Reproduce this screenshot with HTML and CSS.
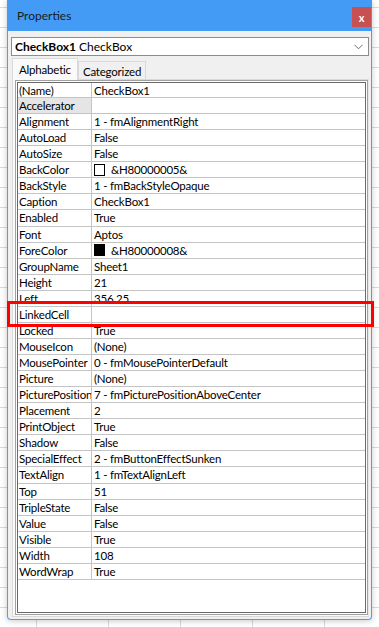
FILE: index.html
```html
<!DOCTYPE html>
<html>

<head>
    <title>Properties</title>
    <link rel="stylesheet" href="styles.css">
</head>

<body>
    <div class="window">
        <div class="titlebar">
            <span class="title">Properties</span>
            <span class="closeButton">x</span>
        </div>

        <div class="combo">
            <b>CheckBox1</b>&nbsp;CheckBox
            <svg class="chevron" width="9" height="6" viewBox="0 0 9 6">
                <path d="M0.5 0.8 L4.5 4.8 L8.5 0.8" fill="none" stroke="#6d6d6d" stroke-width="1" />
            </svg>
        </div>

        <div class="tabs">
            <div class="tab active">Alphabetic</div>
            <div class="tab">Categorized</div>
        </div>

        <div class="tabPane">
            <div class="grid">
                <div class="gridInner">
                    <div class="row first"><div class="name">(Name)</div><div class="value">CheckBox1</div></div>
                    <div class="row selected"><div class="name">Accelerator</div><div class="value"></div></div>
                    <div class="row"><div class="name">Alignment</div><div class="value">1 - fmAlignmentRight</div></div>
                    <div class="row"><div class="name">AutoLoad</div><div class="value">False</div></div>
                    <div class="row"><div class="name">AutoSize</div><div class="value">False</div></div>
                    <div class="row"><div class="name">BackColor</div><div class="value"><span class="swatch"></span>&amp;H80000005&amp;</div></div>
                    <div class="row"><div class="name">BackStyle</div><div class="value">1 - fmBackStyleOpaque</div></div>
                    <div class="row"><div class="name">Caption</div><div class="value">CheckBox1</div></div>
                    <div class="row"><div class="name">Enabled</div><div class="value">True</div></div>
                    <div class="row"><div class="name">Font</div><div class="value">Aptos</div></div>
                    <div class="row"><div class="name">ForeColor</div><div class="value"><span class="swatch black"></span>&amp;H80000008&amp;</div></div>
                    <div class="row"><div class="name">GroupName</div><div class="value">Sheet1</div></div>
                    <div class="row"><div class="name">Height</div><div class="value">21</div></div>
                    <div class="row"><div class="name">Left</div><div class="value">356.25</div></div>
                    <div class="row"><div class="name">LinkedCell</div><div class="value"></div></div>
                    <div class="row"><div class="name">Locked</div><div class="value">True</div></div>
                    <div class="row"><div class="name">MouseIcon</div><div class="value">(None)</div></div>
                    <div class="row"><div class="name">MousePointer</div><div class="value">0 - fmMousePointerDefault</div></div>
                    <div class="row"><div class="name">Picture</div><div class="value">(None)</div></div>
                    <div class="row"><div class="name">PicturePosition</div><div class="value">7 - fmPicturePositionAboveCenter</div></div>
                    <div class="row"><div class="name">Placement</div><div class="value">2</div></div>
                    <div class="row"><div class="name">PrintObject</div><div class="value">True</div></div>
                    <div class="row"><div class="name">Shadow</div><div class="value">False</div></div>
                    <div class="row"><div class="name">SpecialEffect</div><div class="value">2 - fmButtonEffectSunken</div></div>
                    <div class="row"><div class="name">TextAlign</div><div class="value">1 - fmTextAlignLeft</div></div>
                    <div class="row"><div class="name">Top</div><div class="value">51</div></div>
                    <div class="row"><div class="name">TripleState</div><div class="value">False</div></div>
                    <div class="row"><div class="name">Value</div><div class="value">False</div></div>
                    <div class="row"><div class="name">Visible</div><div class="value">True</div></div>
                    <div class="row"><div class="name">Width</div><div class="value">108</div></div>
                    <div class="row"><div class="name">WordWrap</div><div class="value">True</div></div>
                </div>
            </div>
        </div>
    </div>

    <div class="highlight"></div>
</body>

</html>
```

FILE: styles.css
```css
body {
    margin: 0;
    height: 627px;
    overflow: hidden;
    font-family: Lato, "Liberation Sans", Arial, sans-serif;
    font-size: 12px;
    color: #000000;
    background-color: #ffffff;
    background-image:
        linear-gradient(#dadada 1px, transparent 1px),
        linear-gradient(90deg, #dadada 1px, transparent 1px);
    background-size: 72px 20px;
    background-position: 36px 7px;
}

.window {
    margin-left: 7px;
    width: 363px;
    height: 619px;
    border: 1px solid #4a9ff5;
    border-top: none;
    border-radius: 0 0 4px 4px;
    background-color: #f0f0f0;
    box-shadow: 0 1px 6px rgba(0, 0, 0, 0.22);
    display: flex;
    flex-direction: column;
}

.titlebar {
    height: 31px;
    margin: 0 -1px;
    background-color: #439bf5;
    display: flex;
    align-items: center;
    justify-content: space-between;
    padding-left: 10px;
}

.title {
    font-size: 12px;
    color: #1b1b1b;
}

.closeButton {
    width: 19px;
    height: 20px;
    margin-right: 1px;
    margin-top: 3px;
    background-color: #c75050;
    color: #ffffff;
    font-weight: bold;
    font-size: 11px;
    display: flex;
    align-items: center;
    justify-content: center;
}

.combo {
    margin: 6px 2px 0 3px;
    height: 17px;
    border: 1px solid #8c8c8c;
    background-color: #ffffff;
    display: flex;
    align-items: center;
    padding-left: 3px;
    font-size: 12px;
}

.chevron {
    margin-left: auto;
    margin-right: 5px;
}

.tabs {
    display: flex;
    align-items: flex-end;
    margin: 3px 0 0 4px;
    height: 21px;
}

.tab {
    height: 18px;
    padding: 0 4px;
    border: 1px solid #d9d9d9;
    border-bottom: none;
    background-color: #f0f0f0;
    display: flex;
    align-items: center;
    font-size: 11.5px;
    letter-spacing: -0.2px;
}

.tab.active {
    height: 21px;
    padding: 0 6px;
    background-color: #fafafa;
    position: relative;
    z-index: 1;
}

.tabPane {
    margin: -1px 2px 0 4px;
    height: 536px;
    border: 1px solid #d9d9d9;
    border-right-color: #e8e8e8;
    background-color: #fafafa;
    padding: 0 0 0 2px;
}

.grid {
    border: 1px solid #a0a0a0;
    background-color: #ffffff;
    padding: 1px;
    height: 531px;
}

.gridInner {
    border: 1px solid #696969;
    height: 529px;
    background-color: #ffffff;
}

.row {
    display: flex;
    height: 15.07px;
    border-bottom: 1px solid #c4c4c4;
    line-height: 15px;
    font-size: 11.5px;
    letter-spacing: -0.2px;
}

.row.first {
    height: 14px;
    line-height: 15px;
}

.name {
    width: 72px;
    padding-left: 1px;
    border-right: 1px solid #c4c4c4;
    white-space: nowrap;
    overflow: hidden;
}

.row.selected .name {
    background-color: #e5e5e5;
}

.value {
    padding-left: 2px;
    white-space: nowrap;
    display: flex;
    align-items: center;
}

.swatch {
    display: inline-block;
    width: 9px;
    height: 10px;
    border: 1px solid #000000;
    background-color: #ffffff;
    margin-right: 6px;
}

.swatch.black {
    background-color: #000000;
}

.highlight {
    position: absolute;
    left: 7px;
    top: 301px;
    width: 361px;
    height: 20px;
    border: 3px solid #ff0000;
}
```
